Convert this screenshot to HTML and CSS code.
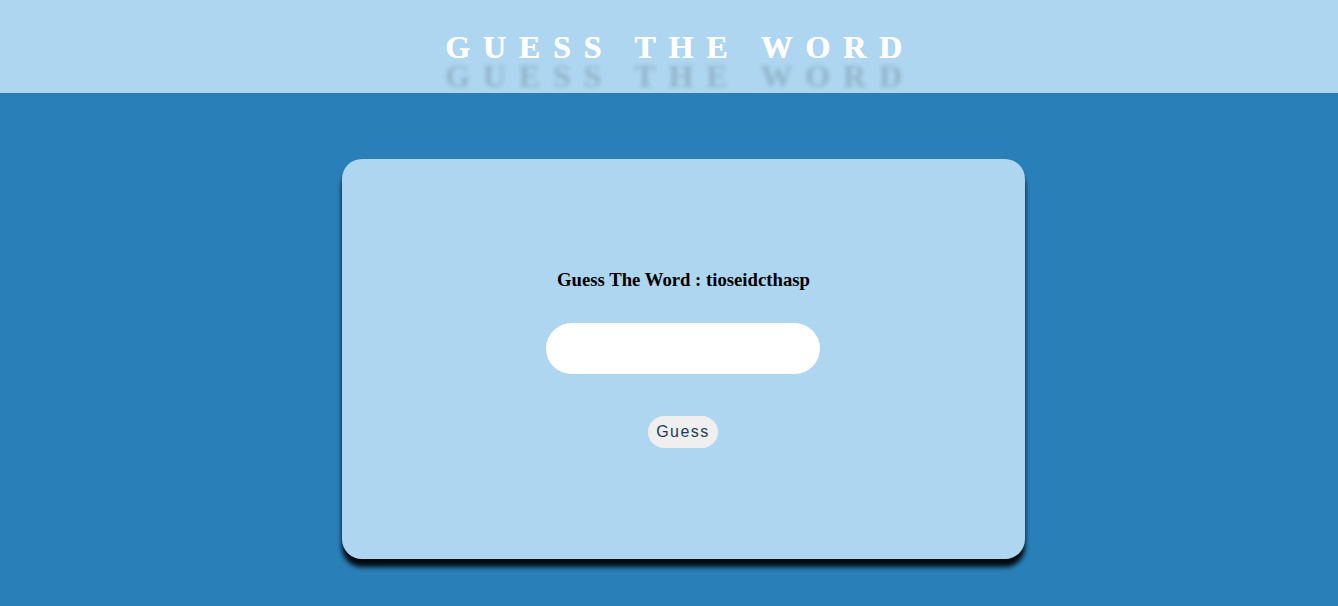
FILE: index.html
```html
<!DOCTYPE html>
<html>
<head>
<meta charset="utf-8">
<link rel="stylesheet" href="styles.css">
</head>
<body>
<header class="top">
  <h1 class="title">GUESS THE WORD</h1>
</header>
<main class="stage">
  <section class="card">
    <h3 class="prompt">Guess The Word : tioseidcthasp</h3>
    <input class="answer" type="text">
    <button class="guess">Guess</button>
  </section>
</main>
</body>
</html>
```
FILE: styles.css
```css
html, body {
  margin: 0;
  padding: 0;
}
body {
  background: #2980b9;
  font-family: "Liberation Serif", "Times New Roman", serif;
  height: 606px;
  overflow: hidden;
}
.top {
  background: #aed6f1;
  height: 93px;
  display: flex;
  justify-content: center;
  padding-left: 22px;
  box-sizing: border-box;
}
.title {
  margin: 0;
  padding-top: 29px;
  font-size: 32px;
  font-weight: bold;
  line-height: 37px;
  letter-spacing: 12.8px;
  color: #fff;
  text-shadow: 0.4px 0 0 #fff, 0 29px 4px rgba(0, 0, 0, 0.16);
}
.stage {
  display: flex;
  justify-content: center;
  padding-top: 66px;
  padding-left: 29px;
}
.card {
  width: 683px;
  height: 400px;
  box-sizing: border-box;
  background: #aed6f1;
  border-radius: 20px;
  box-shadow: 0 8px 5px rgba(0, 0, 0, 0.92);
  display: flex;
  flex-direction: column;
  align-items: center;
  padding-top: 109px;
}
.prompt {
  margin: 0;
  font-size: 18.72px;
  font-weight: bold;
  line-height: 23px;
  color: #000;
}
.answer {
  margin-top: 32px;
  margin-right: 1px;
  width: 274px;
  height: 51px;
  box-sizing: border-box;
  border: none;
  border-radius: 26px;
  background: #fff;
  outline: none;
}
.guess {
  margin-top: 42px;
  margin-right: 1px;
  height: 32px;
  padding: 0 8px;
  border: none;
  border-radius: 16px;
  background: #efefef;
  font-family: "Liberation Sans", Arial, sans-serif;
  font-size: 16px;
  letter-spacing: 1.5px;
  color: #1b3a57;
}
```
